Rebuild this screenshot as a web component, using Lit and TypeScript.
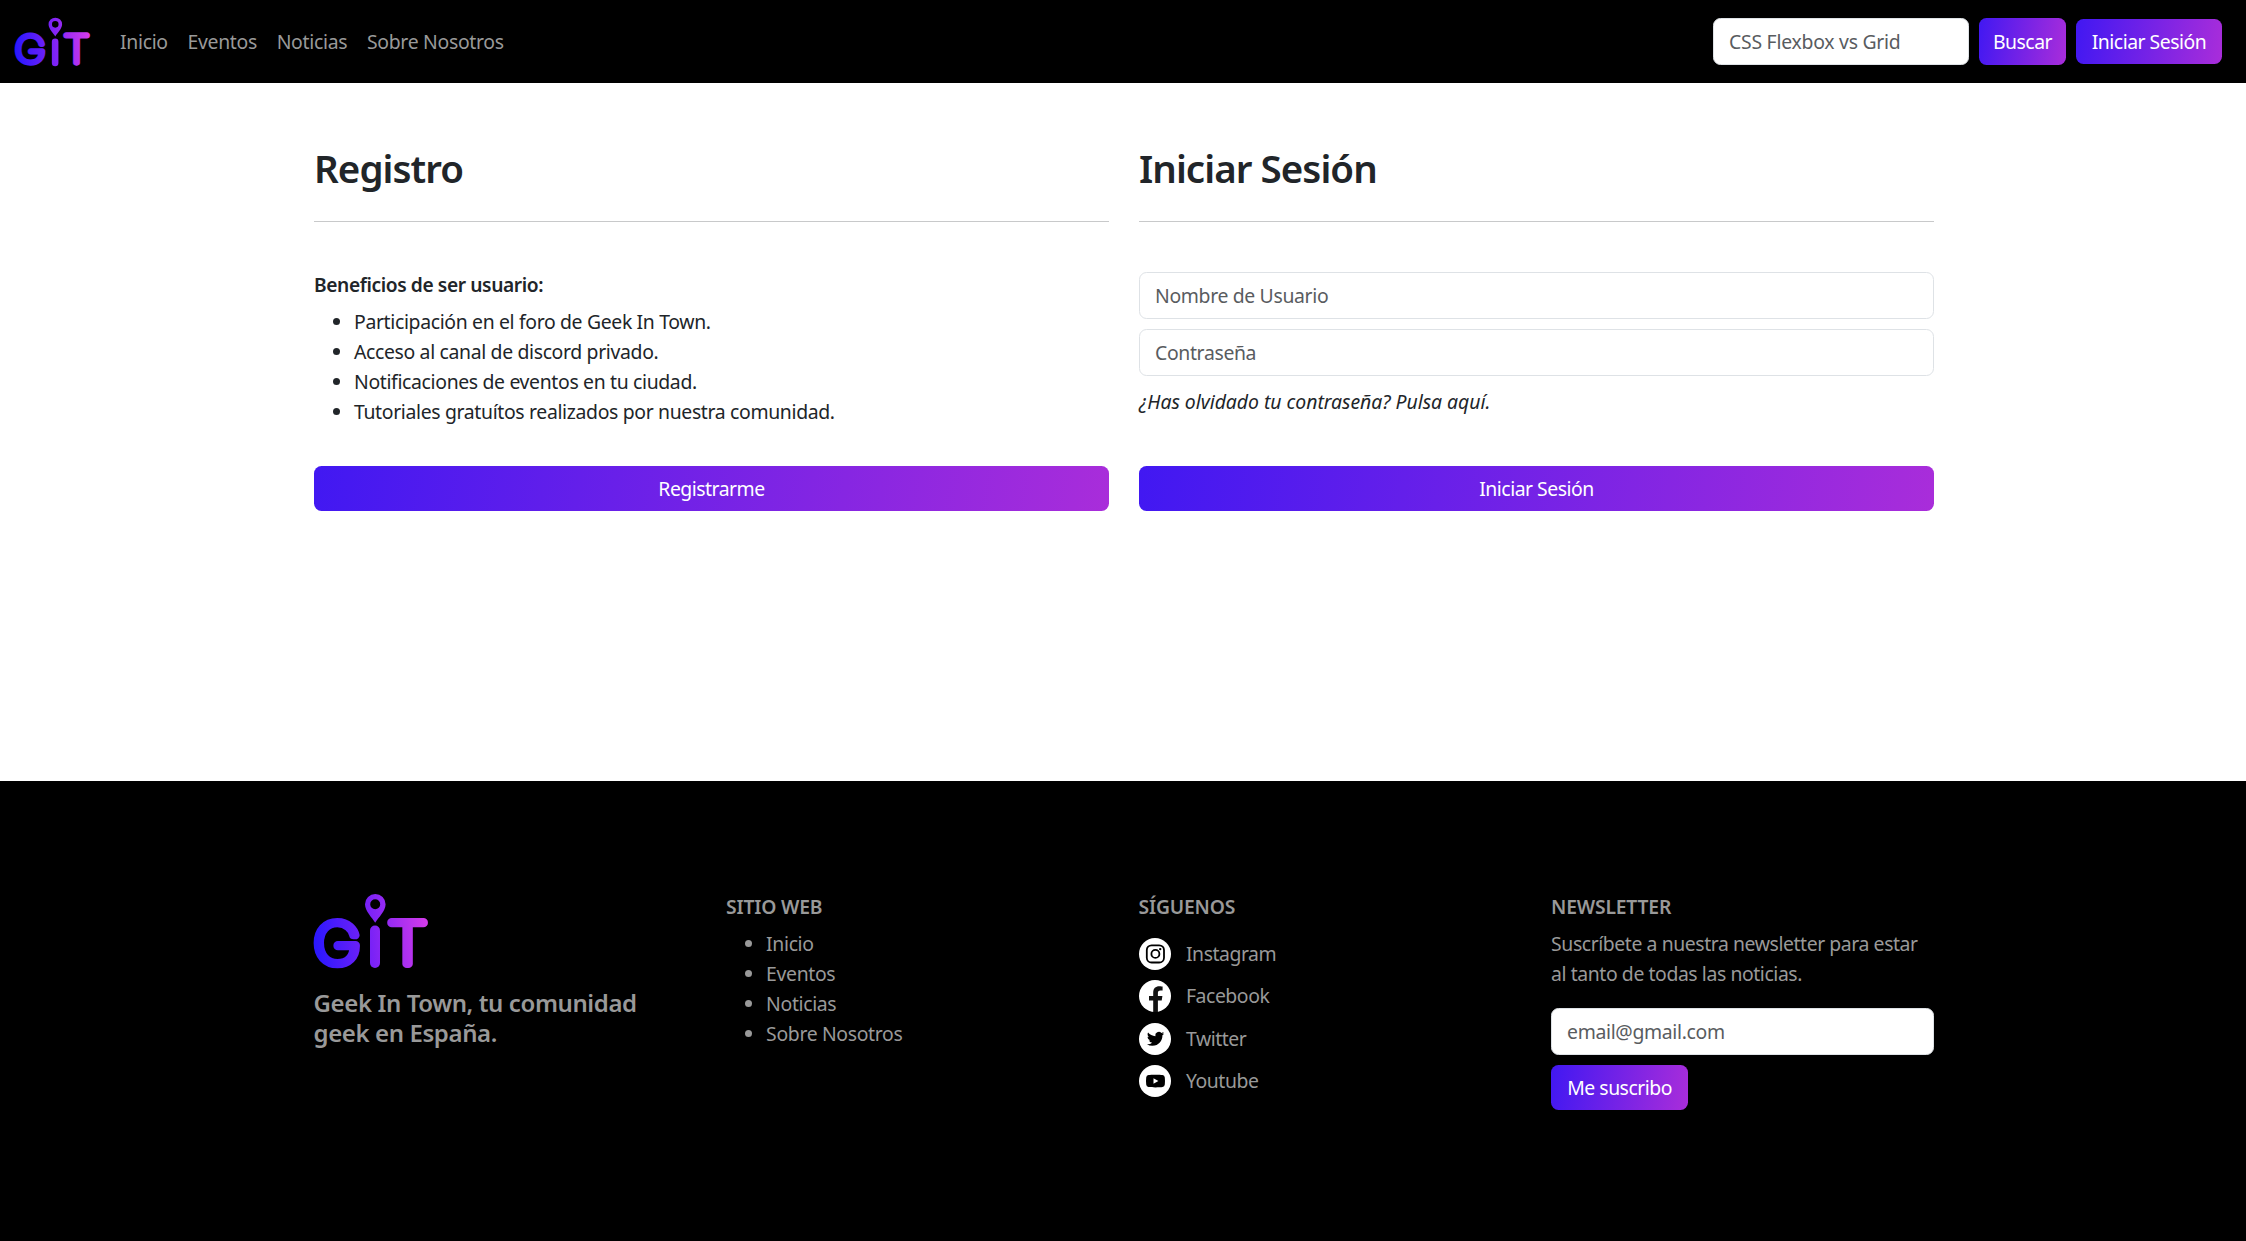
import { LitElement, html, css, svg } from "lit";
import { customElement } from "lit/decorators.js";

const NAV = ["Inicio", "Eventos", "Noticias", "Sobre Nosotros"];
const BENEFITS = [
  "Participación en el foro de Geek In Town.",
  "Acceso al canal de discord privado.",
  "Notificaciones de eventos en tu ciudad.",
  "Tutoriales gratuítos realizados por nuestra comunidad.",
];

const disc = svg`<circle cx="16" cy="16" r="16" fill="#fff"/>`;
const SOCIAL = [
  {
    name: "Instagram",
    icon: svg`${disc}
      <rect x="7.8" y="7.3" width="17.2" height="17.2" rx="4.8" fill="none" stroke="#000" stroke-width="1.8"/>
      <circle cx="16.4" cy="15.9" r="4" fill="none" stroke="#000" stroke-width="1.8"/>
      <circle cx="21.2" cy="11.1" r="1.2"/>`,
  },
  {
    name: "Facebook",
    icon: svg`${disc}
      <path fill="#111" d="M14.200 32V20.600H10V16H14.200V12.600C14.200 8.300 16.500 6.200 20.300 6.200C22 6.200 23.600 6.500 23.600 6.500V10.400H21.500C19.500 10.400 18.900 11.500 18.900 12.900V16H23.400L22.700 20.600H18.900V32Z"/>`,
  },
  {
    name: "Twitter",
    icon: svg`${disc}
      <path transform="translate(7.9 7.2) scale(.72)" d="M23.953 4.57a10 10 0 01-2.825.775 4.958 4.958 0 002.163-2.723c-.951.555-2.005.959-3.127 1.184a4.92 4.92 0 00-8.384 4.482C7.69 8.095 4.067 6.13 1.64 3.162a4.822 4.822 0 00-.666 2.475c0 1.71.87 3.213 2.188 4.096a4.904 4.904 0 01-2.228-.616v.06a4.923 4.923 0 003.946 4.827 4.996 4.996 0 01-2.212.085 4.936 4.936 0 004.604 3.417 9.867 9.867 0 01-6.102 2.105c-.39 0-.779-.023-1.17-.067a13.995 13.995 0 007.557 2.209c9.053 0 13.998-7.496 13.998-13.985 0-.21 0-.42-.015-.63A9.935 9.935 0 0024 4.59z"/>`,
  },
  {
    name: "Youtube",
    icon: svg`${disc}
      <path d="M9.500 10C12 9.500 21 9.500 23.500 10Q25.600 10.300 25.800 12.500Q26.200 16 25.800 19.500Q25.600 21.800 23.500 22C21 22.500 12 22.500 9.500 22Q7.400 21.800 7.200 19.500Q6.800 16 7.200 12.500Q7.400 10.300 9.500 10Z"/>
      <path fill="#fff" d="M14.500 13.200L19.400 16L14.500 18.800Z"/>`,
  },
];

@customElement("git-logo")
class GitLogo extends LitElement {
  static styles = css`
    :host { display: block; }
    svg { display: block; width: 100%; height: 100%; overflow: visible; }
    .letter {
      font-family: Inter, sans-serif;
      font-weight: 100;
      font-size: 57px;
      stroke-width: 8;
      stroke-linejoin: round;
    }
  `;
  render() {
    return html`<svg viewBox="0 0 114 74" role="img">
      <defs>
        <linearGradient id="g" gradientUnits="userSpaceOnUse" x1="0" y1="50" x2="114" y2="40">
          <stop offset="0" stop-color="#1f16ff" />
          <stop offset=".5" stop-color="#7a22f6" />
          <stop offset="1" stop-color="#d63cea" />
        </linearGradient>
        <linearGradient id="t" gradientUnits="userSpaceOnUse" x1="-65" y1="-19.500" x2="37" y2="-29.500">
          <stop offset="0" stop-color="#1f16ff" />
          <stop offset=".5" stop-color="#7a22f6" />
          <stop offset="1" stop-color="#d63cea" />
        </linearGradient>
      </defs>
      <g fill="url(#g)" stroke="url(#g)">
        <text class="letter" transform="translate(-.4 69.500) scale(1.120 1)">G</text>
        <text class="letter" transform="translate(73.800 69.500) scale(1.130 1)" fill="url(#t)" stroke="url(#t)">T</text>
        <rect x="56" y="31.500" width="10" height="42.500" rx="5" stroke="none" />
        <path stroke="none" fill-rule="evenodd" d="M61.200 28.700C58 23.500 51 17 51 10.200A10.300 10.200 0 0 1 71.600 10.200C71.600 17 64.400 23.500 61.200 28.700ZM61.200 5.200A5 5 0 1 0 61.200 15.200A5 5 0 1 0 61.200 5.200Z" />
      </g>
    </svg>`;
  }
}

@customElement("app-root")
class AppRoot extends LitElement {
  static styles = css`
    :host {
      display: flex;
      flex-direction: column;
      height: 1241px;
      background: #fff;
      color: #212529;
      font: 400 19.400px/30px "Noto Sans", "Open Sans", sans-serif;
      letter-spacing: -0.340px;
    }
    * { box-sizing: border-box; }
    h2, h3, p, ul { margin: 0; padding: 0; }
    .bar {
      flex: none;
      display: flex;
      align-items: center;
      height: 83px;
      padding: 0 24px 0 15px;
      background: #000;
      color: #999;
    }
    .bar git-logo { width: 75px; height: 50px; margin-right: 30px; }
    .links { display: flex; gap: 19.700px; letter-spacing: -0.300px; }
    .tools { display: flex; align-items: center; gap: 10px; margin-left: auto; }
    .tools .field { width: 256px; letter-spacing: -0.250px; }
    .field {
      display: block;
      width: 100%;
      height: 47px;
      padding: 0 15px;
      border: 1px solid #dee2e6;
      border-radius: 7.500px;
      background: #fff;
      font: inherit;
      letter-spacing: inherit;
      color: #212529;
      outline: 0;
    }
    .field::placeholder { color: #595c5f; opacity: 1; }
    .btn {
      height: 45px;
      padding: 0;
      border: 0;
      border-radius: 7.500px;
      background: linear-gradient(98deg, #4118f2, #a92dda);
      color: #fff;
      font: inherit;
      letter-spacing: -0.500px;
      white-space: nowrap;
    }
    .search { width: 87px; height: 47px; }
    .login { width: 146px; }
    .subscribe { width: 137px; }
    .wide { width: 100%; }
    .main {
      flex: none;
      display: grid;
      grid-template-columns: 1fr 1fr;
      gap: 30px;
      width: 1620px;
      height: 698px;
      margin-left: 314px;
      padding-top: 61px;
    }
    .panel { height: 367px; display: flex; flex-direction: column; }
    .title {
      font-size: 38.500px;
      font-weight: 600;
      letter-spacing: -0.950px;
      line-height: 48px;
      height: 78px;
      border-bottom: 1px solid #c8c9ca;
      margin-bottom: 50px;
    }
    .body { height: 194px; flex: none; }
    .strong { font-weight: 600; font-size: 19.200px; letter-spacing: -0.400px; margin: -2px 0 7px; }
    .list { padding-left: 40px; }
    .fields { display: grid; gap: 10px; }
    .forgot { font-style: italic; margin-top: 11px; letter-spacing: -0.030px; }
    .foot {
      flex: 1;
      background: #000;
      color: #999;
      padding: 113px 312px 0 313.600px;
      display: grid;
      grid-template-columns: repeat(4, 382.500px);
      gap: 30px;
      align-items: start;
    }
    .foot git-logo { width: 114px; height: 74px; }
    .tagline {
      font-size: 24px;
      font-weight: 600;
      letter-spacing: -0.400px;
      width: 345px;
      margin-top: 20px;
    }
    .head { font-weight: 600; font-size: 19.300px; letter-spacing: -0.180px; margin: -2px 0 7px; }
    .social { display: grid; gap: 10.300px; padding-top: 9px; letter-spacing: -0.450px; }
    .social-row { display: flex; align-items: center; gap: 15.400px; height: 32px; }
    .social-row svg { width: 32px; height: 32px; flex: none; }
    .news { display: flex; flex-direction: column; align-items: flex-start; }
    .news-text { letter-spacing: -0.420px; }
    .news .field { margin: 19px 0 10px; }
  `;

  render() {
    return html`
      <nav class="bar">
        <git-logo></git-logo>
        <div class="links">${NAV.map((n) => html`<span>${n}</span>`)}</div>
        <div class="tools">
          <input class="field" placeholder="CSS Flexbox vs Grid" />
          <button class="btn search">Buscar</button>
          <button class="btn login">Iniciar Sesión</button>
        </div>
      </nav>
      <main class="main">
        <section class="panel">
          <h2 class="title">Registro</h2>
          <div class="body">
            <p class="strong">Beneficios de ser usuario:</p>
            <ul class="list">${BENEFITS.map((b) => html`<li>${b}</li>`)}</ul>
          </div>
          <button class="btn wide">Registrarme</button>
        </section>
        <section class="panel">
          <h2 class="title">Iniciar Sesión</h2>
          <div class="body">
            <div class="fields">
              <input class="field" placeholder="Nombre de Usuario" />
              <input class="field" type="password" placeholder="Contraseña" />
            </div>
            <p class="forgot">¿Has olvidado tu contraseña? Pulsa aquí.</p>
          </div>
          <button class="btn wide">Iniciar Sesión</button>
        </section>
      </main>
      <footer class="foot">
        <section>
          <git-logo></git-logo>
          <p class="tagline">Geek In Town, tu comunidad geek en España.</p>
        </section>
        <section>
          <p class="head">SITIO WEB</p>
          <ul class="list">${NAV.map((n) => html`<li>${n}</li>`)}</ul>
        </section>
        <section>
          <p class="head">SÍGUENOS</p>
          <div class="social">
            ${SOCIAL.map((s) => html`<div class="social-row"><svg viewBox="0 0 32 32">${s.icon}</svg><span>${s.name}</span></div>`)}
          </div>
        </section>
        <section class="news">
          <p class="head">NEWSLETTER</p>
          <p class="news-text">Suscríbete a nuestra newsletter para estar al tanto de todas las noticias.</p>
          <input class="field" placeholder="email@gmail.com" />
          <button class="btn subscribe">Me suscribo</button>
        </section>
      </footer>
    `;
  }
}
